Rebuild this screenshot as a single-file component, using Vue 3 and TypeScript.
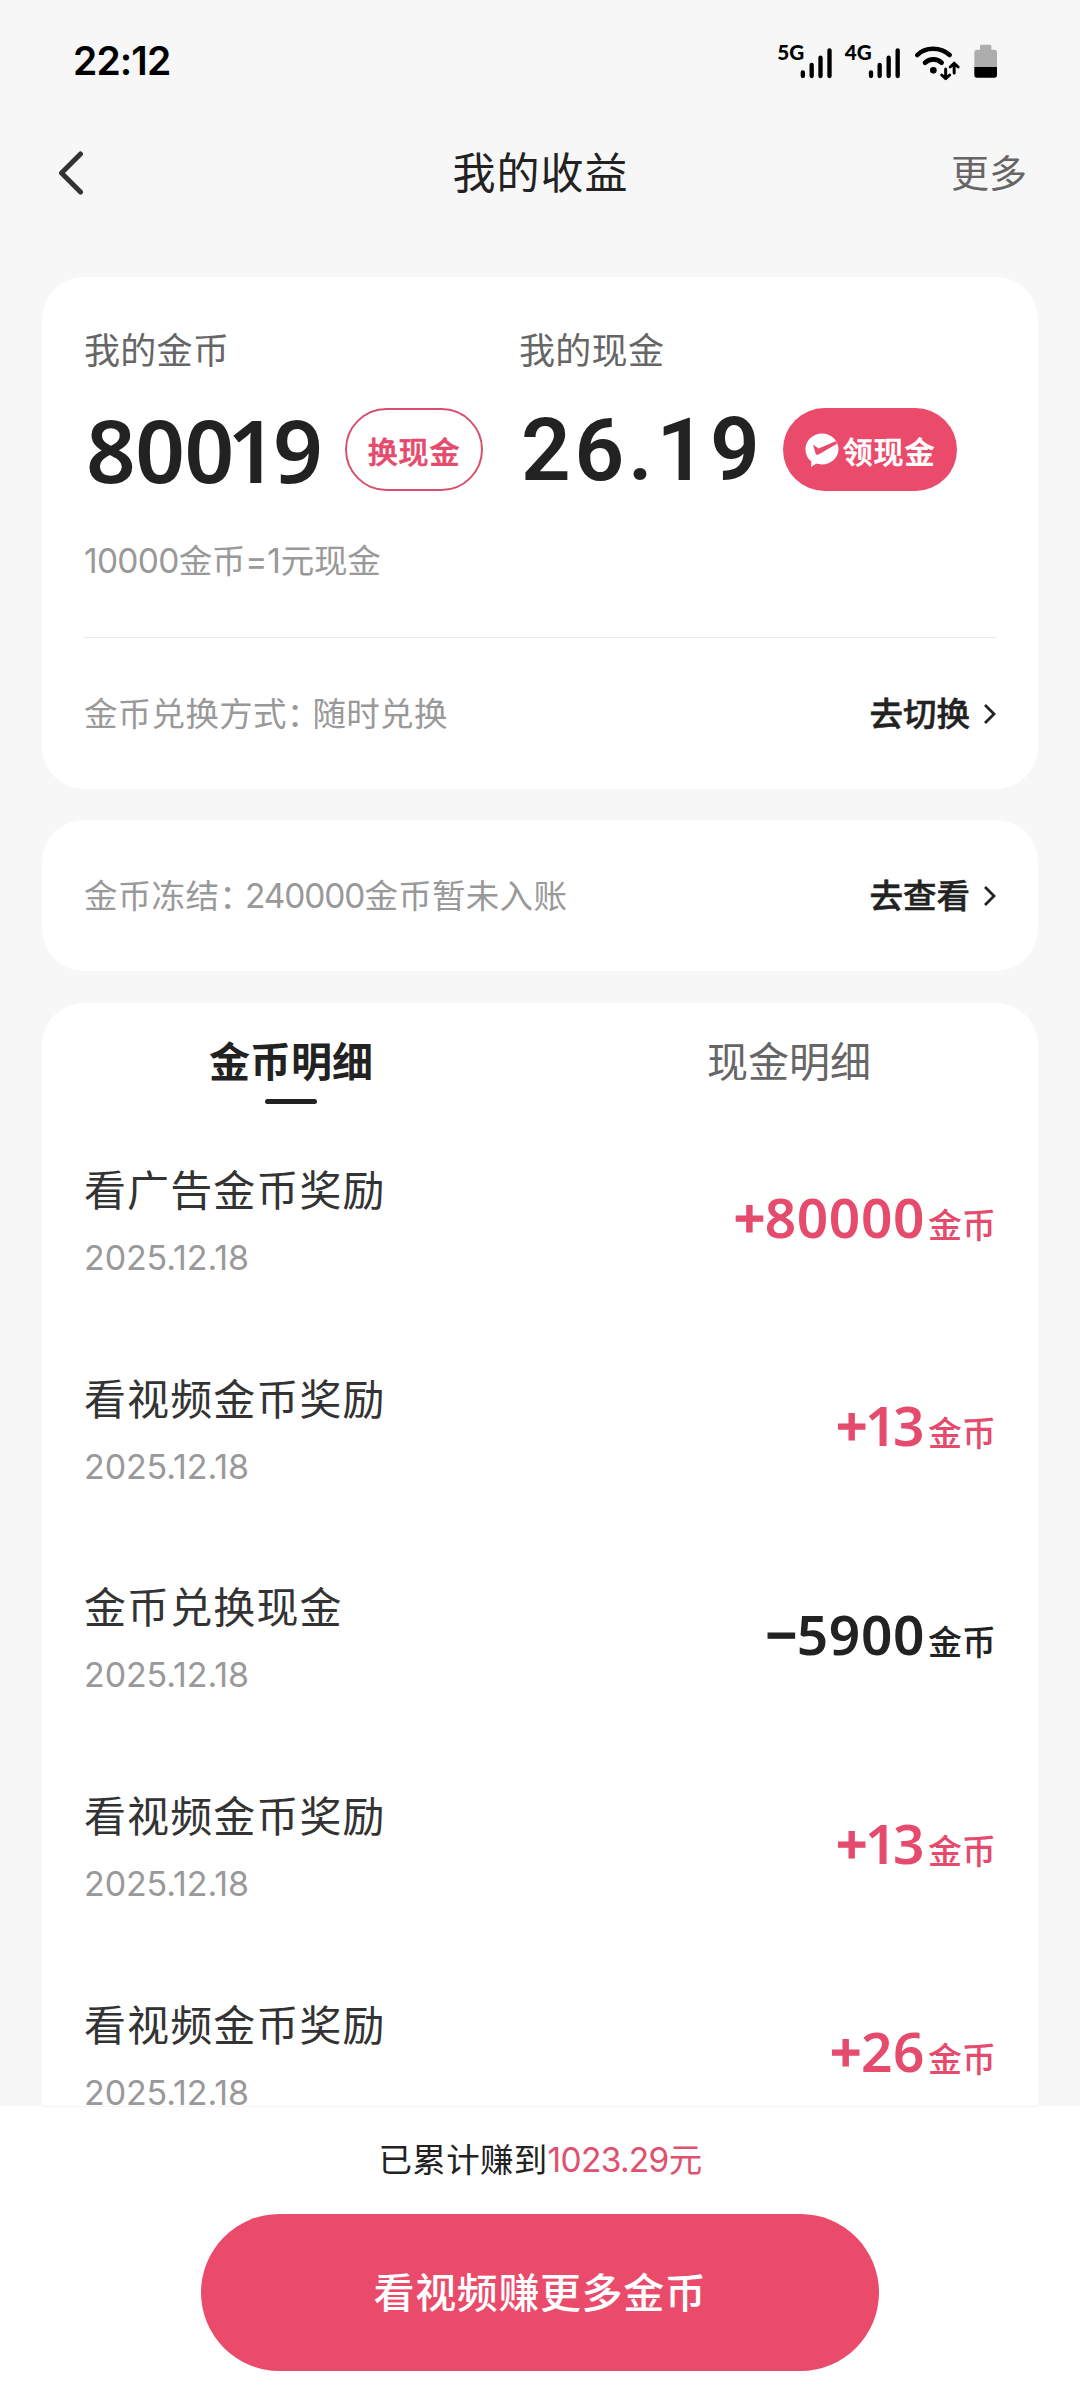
<script setup lang="ts">
interface Entry {
  title: string
  date: string
  amount: string
}

const entries: Entry[] = [
  { title: '看广告金币奖励', date: '2025.12.18', amount: '+80000' },
  { title: '看视频金币奖励', date: '2025.12.18', amount: '+13' },
  { title: '金币兑换现金', date: '2025.12.18', amount: '−5900' },
  { title: '看视频金币奖励', date: '2025.12.18', amount: '+13' },
  { title: '看视频金币奖励', date: '2025.12.18', amount: '+26' },
]

const isIncome = (entry: Entry): boolean => entry.amount.startsWith('+')
</script>

<template>
  <div class="page">
    <div class="status">
      <span class="time">22:12</span>
      <svg class="status-icons" width="220" height="36" viewBox="0 0 660 108">
        <text x="-2" y="51" class="net">5G</text>
        <g stroke="#000" stroke-width="13" stroke-linecap="round">
          <path d="M74.5 88v11M101 66v33M127.500 44v55M154.500 22v77" />
          <path d="M279 88v11M305 66v33M332 44v55M359 22v77" />
        </g>
        <text x="200" y="51" class="net">4G</text>
        <g fill="none" stroke="#000" stroke-linecap="round" stroke-linejoin="round">
          <path stroke-width="14" d="M418 36C442 11 488 11 515 36M441 59C455 46 477 46 491 59" />
          <path stroke-width="9" d="M503 78v28M491 96l12 11 12-11M528.500 90V60M516.500 72l12-11 12 11" />
        </g>
        <circle cx="466" cy="82" r="10" />
        <path fill="#adadad" d="M606 9q0-4 4-4h26q4 0 4 4v11h9q8 0 8 8v45h-68V28q0-8 8-8h9z" />
        <path d="M589 72h68v24q0 8-8 8h-52q-8 0-8-8z" />
      </svg>
    </div>

    <header class="nav">
      <svg class="back" width="26" height="44" viewBox="0 0 26 44">
        <path d="M22.500 3L3.500 22l19 19" />
      </svg>
      <h1>我的收益</h1>
      <span class="more">更多</span>
    </header>

    <section class="card balance">
      <div class="accounts">
        <div class="account">
          <span class="label">我的金币</span>
          <div class="figure">
            <span class="coins">80<i>0</i><i class="one">1</i>9</span>
            <span class="pill outline">换现金</span>
          </div>
        </div>
        <div class="account">
          <span class="label">我的现金</span>
          <div class="figure">
            <span class="cash">26.19</span>
            <span class="pill solid">
              <svg width="34" height="34" viewBox="0 0 34 34">
                <path fill="#fff" d="M17 .5C26 .5 33.500 7.500 33.500 16S26 31.500 17 31.500c-2 0-4-.3-5.500-.9L6 34l.3-5.500C2.700 25.700.5 21 .5 16 .5 7.500 8 .5 17 .5z" />
                <path fill="#eb4b6b" d="M8 11.500l5.500 4L30.500 8.200l2 2.300L13.500 21.500c-1.500.8-2.500.2-3-1.200z" />
              </svg>
              领现金
            </span>
          </div>
        </div>
      </div>
      <p class="rate"><i>10000</i>金币=1元现金</p>
      <div class="row ruled">
        <span class="hint">金币兑换方式<span class="colon">：</span>随时兑换</span>
        <span class="link">去切换<svg width="13" height="22" viewBox="0 0 13 22"><path d="M2 2l9 9-9 9" /></svg></span>
      </div>
    </section>

    <section class="card row">
      <span class="hint">金币冻结<span class="colon">：</span><i>240000</i>金币暂未入账</span>
      <span class="link">去查看<svg width="13" height="22" viewBox="0 0 13 22"><path d="M2 2l9 9-9 9" /></svg></span>
    </section>

    <section class="card ledger">
      <div class="tabs">
        <div class="tab active">金币明细</div>
        <div class="tab">现金明细</div>
      </div>
      <ul>
        <li v-for="(entry, index) in entries" :key="index">
          <div class="info">
            <span class="title">{{ entry.title }}</span>
            <span class="date">{{ entry.date }}</span>
          </div>
          <div class="amount" :class="{ income: isIncome(entry) }">
            <b><i v-for="(char, at) in entry.amount" :key="at" :class="{ one: char === '1', sign: at === 0 }">{{ char }}</i></b>
            <span>金币</span>
          </div>
        </li>
      </ul>
    </section>

    <footer>
      <p class="total">已累计赚到<em>1023.29元</em></p>
      <button type="button">看视频赚更多金币</button>
    </footer>
  </div>
</template>

<style>
body {
  background: #f7f7f7;
}
</style>

<style scoped>
.page {
  box-sizing: border-box;
  display: flex;
  flex-direction: column;
  width: 1080px;
  height: 2400px;
  overflow: hidden;
  background: #f7f7f7;
  color: #222;
  font-family: Inter, 'Noto Sans CJK SC', sans-serif;
}

i {
  font-style: normal;
}

.status {
  display: flex;
  flex: none;
  align-items: center;
  justify-content: space-between;
  height: 122px;
  padding: 0 82px 0 73px;
}

.time {
  color: #000;
  font-size: 39px;
  font-weight: 600;
  line-height: 60px;
  letter-spacing: -0.9px;
}

.status-icons {
  overflow: visible;
}

.net {
  font-family: Lato, sans-serif;
  font-size: 62px;
  font-weight: 900;
}

.nav {
  display: grid;
  flex: none;
  grid-template-columns: 1fr auto 1fr;
  align-items: center;
  height: 102px;
  margin-bottom: 53px;
  padding: 0 57px 0 58px;
}

.back path {
  fill: none;
  stroke: #333;
  stroke-width: 5;
  stroke-linecap: round;
  stroke-linejoin: round;
}

h1 {
  margin: 0;
  font-size: 43px;
  font-weight: 400;
  line-height: 60px;
  letter-spacing: 1px;
}

.more {
  justify-self: end;
  margin-right: -4px;
  color: #666;
  font-size: 38px;
  line-height: 60px;
}

.card {
  box-sizing: border-box;
  flex: none;
  margin: 0 42px 31px;
  padding: 0 42px;
  border-radius: 42px;
  background: #fff;
}

.accounts {
  display: grid;
  grid-template-columns: 435px 1fr;
  padding-top: 49px;
}

.label {
  display: block;
  color: #666;
  font-size: 36px;
  line-height: 50px;
  letter-spacing: 0.3px;
}

.figure {
  display: flex;
  align-items: center;
  height: 83px;
  margin-top: 32px;
}

.coins {
  box-sizing: border-box;
  width: 261px;
  padding-left: 2px;
  font-family: 'Noto Sans', sans-serif;
  font-size: 87px;
  font-weight: 600;
  line-height: 83px;
  letter-spacing: -0.5px;
}

.coins i {
  letter-spacing: -7px;
}

.coins .one {
  letter-spacing: -4px;
}

.cash {
  box-sizing: border-box;
  width: 264px;
  padding: 2px 0 0 2px;
  font-family: Roboto, sans-serif;
  font-size: 87px;
  font-weight: 600;
  line-height: 85px;
  letter-spacing: 3.800px;
}

.pill {
  display: flex;
  box-sizing: border-box;
  align-items: center;
  justify-content: center;
  height: 83px;
  border-radius: 42px;
  font-size: 30px;
  font-weight: 500;
  letter-spacing: 0.8px;
  -webkit-text-stroke: 0.6px currentColor;
}

.outline {
  width: 138px;
  border: 2px solid #d9506f;
  color: #e54b6d;
}

.solid {
  gap: 4px;
  width: 174px;
  background: #eb4b6b;
  color: #fff;
}

.rate {
  margin: 45px 0 51px;
  color: #999;
  font-size: 33.500px;
  line-height: 50px;
  letter-spacing: -0.2px;
}

.rate i {
  letter-spacing: -0.7px;
}

.row {
  display: flex;
  align-items: center;
  justify-content: space-between;
  height: 151px;
}

.ruled {
  border-top: 1px solid #e8e8e8;
}

.hint {
  color: #999;
  font-size: 33.500px;
  line-height: 50px;
  letter-spacing: 0.3px;
}

.hint i {
  letter-spacing: -1.100px;
}

.colon {
  letter-spacing: -7.800px;
}

.link {
  display: flex;
  align-items: center;
  font-size: 33.500px;
  font-weight: 500;
  line-height: 50px;
  -webkit-text-stroke: 0.5px currentColor;
}

.link svg {
  margin-left: 13px;
}

.link path {
  fill: none;
  stroke: #222;
  stroke-width: 2.800;
}

.ledger {
  display: flex;
  flex: 1 1 0;
  flex-direction: column;
  min-height: 0;
  margin-top: 1px;
  margin-bottom: 0;
  overflow: hidden;
  border-radius: 42px 42px 0 0;
}

.tabs {
  display: flex;
  flex: none;
  height: 112.500px;
  margin: 0 -42px;
}

.tab {
  display: flex;
  flex: 1;
  flex-direction: column;
  align-items: center;
  padding-top: 29px;
  color: #666;
  font-size: 41px;
  line-height: 60px;
}

.active {
  color: #222;
  font-weight: 700;
}

.active::after {
  width: 52px;
  height: 5px;
  margin-top: 7px;
  border-radius: 3px;
  background: #222;
  content: '';
}

ul {
  margin: 0;
  padding: 0;
  list-style: none;
}

li {
  display: flex;
  align-items: center;
  justify-content: space-between;
  height: 208.600px;
}

.info {
  display: flex;
  flex-direction: column;
  gap: 17px;
}

.title {
  color: #333;
  font-size: 42px;
  line-height: 60px;
  letter-spacing: 1.100px;
}

.date {
  color: #999;
  font-size: 34px;
  line-height: 40px;
  letter-spacing: -0.1px;
}

.amount {
  display: flex;
  align-items: baseline;
  padding-top: 2px;
  font-size: 34px;
  font-weight: 500;
  line-height: 60px;
}

.amount b {
  margin-right: 3px;
  font-family: 'Noto Sans', sans-serif;
  font-size: 55px;
  font-weight: 600;
  line-height: 62px;
  letter-spacing: 0.6px;
}

.amount .one {
  letter-spacing: -3.500px;
}

.amount .sign {
  letter-spacing: -0.5px;
  -webkit-text-stroke: 1.200px currentColor;
}

.amount .sign + .one {
  margin-left: -2px;
}

.income {
  color: #e54b6d;
}

footer {
  display: flex;
  box-sizing: border-box;
  flex: none;
  flex-direction: column;
  align-items: center;
  height: 294px;
  padding-top: 29px;
  background: linear-gradient(#f3f3f3, #f3f3f3) 42px 0 / 996px 1px no-repeat #fff;
}

.total {
  margin: 0;
  font-size: 33.500px;
  line-height: 50px;
  letter-spacing: 0.3px;
}

.total em {
  color: #e0506f;
  font-style: normal;
  letter-spacing: -0.7px;
}

button {
  width: 678px;
  height: 157px;
  margin-top: 29px;
  padding: 0;
  border: 0;
  border-radius: 79px;
  background: #eb4b6b;
  color: #fff;
  font: 500 41px/60px Inter, 'Noto Sans CJK SC', sans-serif;
  letter-spacing: 0.6px;
}
</style>
